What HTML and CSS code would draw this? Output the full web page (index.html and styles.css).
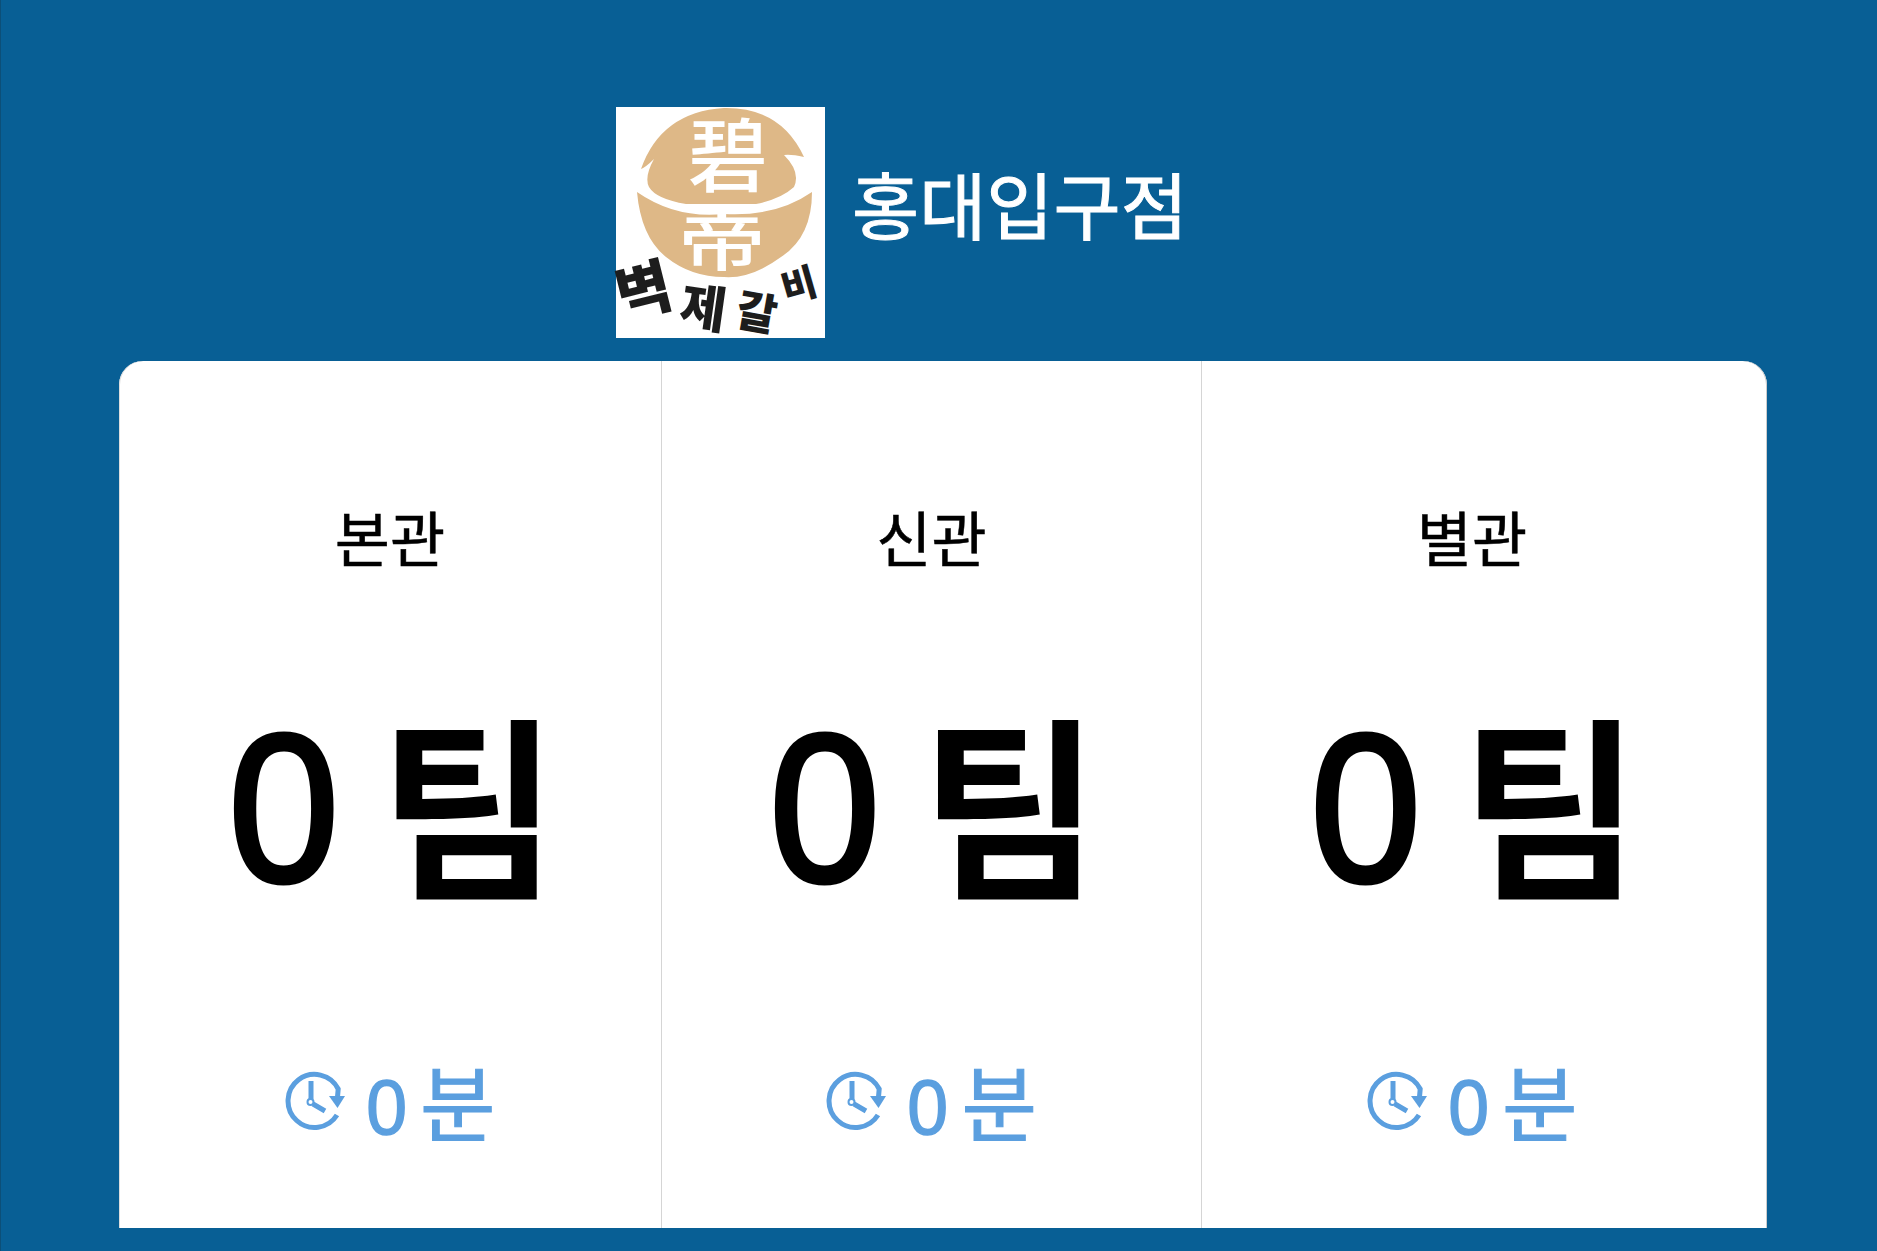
FILE: index.html
```html
<!DOCTYPE html>
<html lang="ko">
<head>
<meta charset="utf-8">
<title>홍대입구점</title>
<link rel="stylesheet" href="styles.css">
</head>
<body>
<main class="page">
  <header class="store">
    <svg class="logo" viewBox="0 0 209 231" role="img" aria-label="벽제갈비">
      <rect width="209" height="231" fill="#fff"/>
      <path class="seal" d="M108 1 Q165 0 188 50 Q175 47 168 48 Q185 65 178 80 Q165 92 140 97 L70 97 Q40 92 33 80 Q28 70 38 52 Q30 60 25 62 Q45 5 108 1Z"/>
      <path class="seal" d="M21 85 Q60 112 108 107 Q160 110 196 85 Q196 130 165 150 Q135 172 108 170 Q75 170 50 150 Q25 130 21 85Z"/>
      <text class="seal-char" x="112" y="78" text-anchor="middle">碧</text>
      <text class="seal-char" transform="translate(106 158) scale(1.1 .8)" text-anchor="middle">帝</text>
      <text class="brush brush-a" transform="translate(6 211) rotate(-14)">벽</text>
      <text class="brush brush-b" transform="translate(62 216) rotate(8)">제</text>
      <text class="brush brush-c" transform="translate(118 218) rotate(10)">갈</text>
      <text class="brush brush-d" transform="translate(170 196) rotate(-16)">비</text>
    </svg>
    <h1 class="store-name">홍대입구점</h1>
  </header>
  <section class="board">
    <article class="hall">
      <h2 class="hall-name">본관</h2>
      <p class="teams"><span class="num">0</span> <span class="unit">팀</span></p>
      <p class="wait">
        <svg class="clock" viewBox="0 0 60 60"><use href="#clock-icon"/></svg>
        <span class="wait-num">0</span> <span class="wait-unit">분</span>
      </p>
    </article>
    <article class="hall">
      <h2 class="hall-name">신관</h2>
      <p class="teams"><span class="num">0</span> <span class="unit">팀</span></p>
      <p class="wait">
        <svg class="clock" viewBox="0 0 60 60"><use href="#clock-icon"/></svg>
        <span class="wait-num">0</span> <span class="wait-unit">분</span>
      </p>
    </article>
    <article class="hall">
      <h2 class="hall-name">별관</h2>
      <p class="teams"><span class="num">0</span> <span class="unit">팀</span></p>
      <p class="wait">
        <svg class="clock" viewBox="0 0 60 60"><use href="#clock-icon"/></svg>
        <span class="wait-num">0</span> <span class="wait-unit">분</span>
      </p>
    </article>
  </section>
  <svg class="defs" width="0" height="0" aria-hidden="true">
    <symbol id="clock-icon" viewBox="0 0 60 60">
      <path d="M52.500 26 L53.200 18 A26.500 26.500 0 1 0 52 44" fill="none" stroke="currentColor" stroke-width="5"/>
      <path d="M44 25 H60 L52.500 37Z" fill="currentColor"/>
      <path d="M26 10 V28 M28 33 L40 40" fill="none" stroke="currentColor" stroke-width="5"/>
      <circle cx="25.500" cy="31" r="3" fill="none" stroke="currentColor" stroke-width="2"/>
    </symbol>
  </svg>
</main>
</body>
</html>
```
FILE: styles.css
```css
* { box-sizing: border-box; }
html, body { margin: 0; height: 100%; }
body {
  background: #085f95;
  font-family: "Liberation Sans", "Noto Sans CJK KR", sans-serif;
  overflow: hidden;
}
.page {
  height: 1251px;
  padding: 107px 110px 23px 118px;
  border-left: 1px solid #0c4f78;
  display: flex;
  flex-direction: column;
}
.store {
  display: flex;
  align-items: flex-start;
  height: 254px;
  padding-left: 497px;
  gap: 27px;
}
.logo { width: 209px; height: 231px; flex: none; display: block; overflow: visible; }
.seal { fill: #deb887; }
.seal-char { fill: #fff; font-family: "Noto Sans CJK KR", sans-serif; font-size: 80px; font-weight: 500; }
.brush { fill: #1d1d1d; font-family: "Noto Sans CJK KR", sans-serif; font-weight: 900; }
.brush-a { font-size: 60px; }
.brush-b { font-size: 50px; }
.brush-c { font-size: 44px; }
.brush-d { font-size: 38px; }
.store-name {
  margin: 55px 0 0;
  color: #fff;
  font-weight: 400;
  font-size: 73px;
  line-height: 80px;
  font-family: "Noto Sans CJK KR", sans-serif;
  -webkit-text-stroke: 1px #fff;
}
.board {
  width: 1648px;
  height: 867px;
  flex: none;
  background: #fff;
  border-radius: 24px 24px 0 0;
  box-shadow: inset -1px 0 0 #ccc, inset 1px 0 0 #ddd;
  display: grid;
  grid-template-columns: 543px 540px 565px;
}
.hall {
  display: flex;
  flex-direction: column;
  align-items: center;
  border-right: 1px solid #d5d5d5;
}
.hall:last-child { border-right: 0; padding-right: 25px; }
.hall-name {
  margin: 146px 0 0;
  font-size: 60px;
  line-height: 70px;
  font-weight: 400;
  color: #000;
  -webkit-text-stroke: 0.5px #000;
}
.teams {
  margin: 137px 0 0;
  display: flex;
  align-items: center;
  height: 190px;
  color: #000;
}
.num {
  font-size: 210px;
  line-height: 190px;
  font-weight: 400;
  -webkit-text-stroke: 5px #000;
  transform: scaleX(.945);
  transform-origin: right center;
}
.unit {
  font-size: 195px;
  line-height: 190px;
  font-weight: 700;
  font-family: "Noto Sans CJK KR", sans-serif;
  margin: 0 0 20px 40px;
}
.wait {
  margin: 164px 0 0;
  display: flex;
  align-items: center;
  color: #5b9fdf;
}
.clock { width: 60px; height: 60px; display: block; margin-bottom: 13px; }
.wait-num {
  font-size: 78px;
  line-height: 78px;
  margin-left: 20px;
  -webkit-text-stroke: 1.500px #5b9fdf;
  transform: scaleX(.94);
}
.wait-unit { font-size: 82px; line-height: 78px; margin-left: 12px; -webkit-text-stroke: 1px #5b9fdf; }
.defs { position: absolute; }
```
